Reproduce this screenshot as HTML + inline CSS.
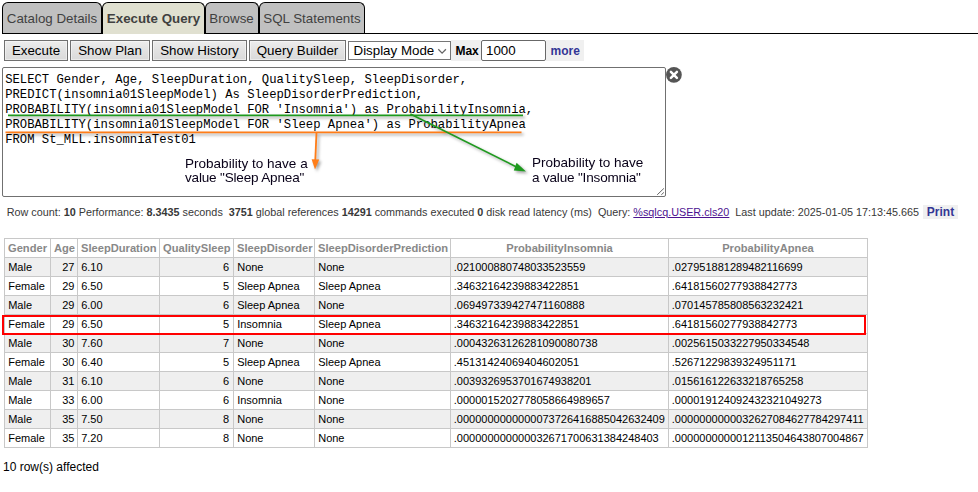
<!DOCTYPE html>
<html>
<head>
<meta charset="utf-8">
<title>Execute Query</title>
<style>
html,body{margin:0;padding:0;background:#fff;}
body{width:978px;height:492px;position:relative;overflow:hidden;font-family:"Liberation Sans",sans-serif;color:#000;}
/* tabs */
.tabbar{position:absolute;left:0;top:0;width:978px;height:34px;}
.tabline{position:absolute;left:2px;top:33px;width:976px;height:1px;background:#000;}
.tab{position:absolute;top:2px;height:31px;box-sizing:border-box;border:1px solid #000;border-bottom:none;border-radius:6px 6px 0 0;background:#c0c0c0;color:#404040;font-size:13.33px;line-height:32px;text-align:center;white-space:nowrap;}
.tab.on{background:#e0e0d0;font-weight:bold;height:32px;}
/* toolbar */
.btn{position:absolute;top:40px;height:21px;box-sizing:border-box;border:1px solid #707070;background:linear-gradient(#ededed,#e2e2e2 50%,#dadada);box-shadow:inset 0 0 0 1px rgba(255,255,255,.45);font-size:13.33px;line-height:19px;text-align:center;color:#000;white-space:nowrap;}
.sel{position:absolute;left:348px;top:41px;width:103px;height:19px;box-sizing:border-box;border:1px solid #767676;background:#fff;font-size:13.33px;line-height:17px;padding-left:4.5px;white-space:nowrap;}
.maxl{position:absolute;left:451px;top:40px;width:30px;height:21px;background:#f0f0f0;font-size:12px;font-weight:bold;line-height:22.4px;text-align:left;padding-left:4.4px;box-sizing:border-box;}
.maxi{position:absolute;left:481px;top:40px;width:65px;height:21px;box-sizing:border-box;border:1px solid #686868;border-radius:2px;background:#fff;font-size:13.33px;line-height:19px;padding-left:4px;}
.more{position:absolute;left:546px;top:40px;width:38px;height:21px;background:#f0f0f0;font-size:12px;font-weight:bold;line-height:22.4px;text-align:left;padding-left:4.6px;box-sizing:border-box;color:#333695;}
/* textarea */
.ta{position:absolute;left:2px;top:67px;width:664px;height:130px;box-sizing:border-box;border:1px solid #707070;border-radius:2px;background:#fff;}
.ta pre{margin:0;position:absolute;left:2.2px;top:4.5px;font-family:"Liberation Mono",monospace;font-size:12.22px;line-height:15px;color:#000;}
.note{position:absolute;font-size:12.15px;line-height:14.5px;color:#080018;white-space:nowrap;transform:scaleX(1.115);transform-origin:0 0;}
.note span{letter-spacing:-0.16px;}
/* status */
.status{position:absolute;left:6.7px;top:205.4px;font-size:10.8px;line-height:14px;white-space:pre;color:#383838;}
.status b{font-weight:bold;}
.status a{color:#4c1290;text-decoration:underline;text-decoration-thickness:1px;}
.print{position:absolute;left:923px;top:205px;width:35px;height:14px;background:#f0f0f0;font-size:12px;font-weight:bold;line-height:14px;text-align:center;color:#333695;}
/* table */
table.res{position:absolute;left:4px;top:238px;border-collapse:collapse;font-size:11px;table-layout:fixed;width:863px;}
table.res th,table.res td{border:1px solid #c8c8c8;height:18px;padding:0 2.6px 0 3.2px;box-sizing:border-box;white-space:nowrap;overflow:hidden;line-height:18px;}
table.res th{color:#888;font-weight:bold;text-align:left;background:#fff;font-size:11.15px;padding-left:3px;padding-right:3px;}
table.res th.c{text-align:center;}
table.res td.r{text-align:right;}
table.res td.n{padding-left:2.8px;}
table.res td.q{padding-right:3.8px;}
table.res tr.o td{background:#efefef;}
.hl{position:absolute;left:2px;top:315px;width:864px;height:20px;box-sizing:border-box;border:2px solid #ff0000;}
.foot{position:absolute;left:3px;top:460px;font-size:12px;line-height:14px;}
</style>
</head>
<body>
<div class="tabbar">
  <div class="tabline"></div>
  <div class="tab" style="left:2px;width:100px;">Catalog Details</div>
  <div class="tab on" style="left:102px;width:103px;">Execute Query</div>
  <div class="tab" style="left:205px;width:54px;padding-right:1px;">Browse</div>
  <div class="tab" style="left:259px;width:106px;">SQL Statements</div>
</div>

<div class="btn" style="left:4px;width:64px;">Execute</div>
<div class="btn" style="left:70px;width:80px;">Show Plan</div>
<div class="btn" style="left:152px;width:95px;">Show History</div>
<div class="btn" style="left:249px;width:97px;">Query Builder</div>
<div class="sel">Display Mode
  <svg style="position:absolute;left:88px;top:5.5px" width="12" height="7" viewBox="0 0 12 7"><path d="M1.3 1.2 L5.1 5.2 L8.9 1.2" fill="none" stroke="#666" stroke-width="1.25"/></svg>
</div>
<div class="maxl">Max</div>
<div class="maxi">1000</div>
<div class="more">more</div>

<div class="ta"><pre>SELECT Gender, Age, SleepDuration, QualitySleep, SleepDisorder,
PREDICT(insomnia01SleepModel) As SleepDisorderPrediction,
PROBABILITY(insomnia01SleepModel FOR 'Insomnia') as ProbabilityInsomnia,
PROBABILITY(insomnia01SleepModel FOR 'Sleep Apnea') as ProbabilityApnea
FROM St_MLL.insomniaTest01</pre><svg style="position:absolute;right:0;bottom:0" width="10" height="10" viewBox="0 0 10 10"><path d="M2.2 8.8 L8.9 2.4 M6.3 8.8 L8.9 6.4" stroke="#666" stroke-width="1" fill="none"/></svg></div>

<svg style="position:absolute;left:0;top:60px;filter:drop-shadow(2.2px 2.4px 1.5px rgba(0,0,0,.36))" width="700" height="140" viewBox="0 60 700 140">
  <g>
    <line x1="8" y1="115.4" x2="523" y2="115.4" stroke="#1e9a1e" stroke-width="1.7"/>
    <line x1="5.5" y1="132.4" x2="521.5" y2="132.4" stroke="#ff7d18" stroke-width="1.7"/>
    <line x1="410.4" y1="114" x2="517" y2="167.2" stroke="#1e9a1e" stroke-width="1.6"/>
    <polygon points="526,171.5 513.8,170.6 516.6,162.8" fill="#1e9a1e"/>
    <line x1="316.5" y1="132.4" x2="315.3" y2="160" stroke="#ff7d18" stroke-width="1.8"/>
    <polygon points="315,169.4 311.6,159.2 319.2,159.6" fill="#ff7d18"/>
  </g>
</svg>
<div class="note" style="left:185px;top:156.5px;line-height:14.2px;">Probability to have a<br><span>value "Sleep Apnea"</span></div>
<div class="note" style="left:532px;top:155.9px;line-height:14.7px;">Probability to have<br><span>a value "Insomnia"</span></div>

<svg style="position:absolute;left:665px;top:66px" width="18" height="18" viewBox="0 0 18 18">
  <circle cx="8.9" cy="8.8" r="7.9" fill="#555"/>
  <path d="M5.9 5.8 L11.9 11.8 M11.9 5.8 L5.9 11.8" stroke="#fff" stroke-width="2.5" stroke-linecap="round"/>
</svg>

<div class="status">Row count: <b>10</b> Performance: <b>8.3435</b> seconds  <b>3751</b> global references <b>14291</b> commands executed <b>0</b> disk read latency (ms)  Query: <a>%sqlcq.USER.cls20</a>  Last update: 2025-01-05 17:13:45.665</div>
<div class="print">Print</div>

<table class="res">
<colgroup><col style="width:46px"><col style="width:27px"><col style="width:82px"><col style="width:74px"><col style="width:81px"><col style="width:136px"><col style="width:218px"><col style="width:199px"></colgroup>
<tr><th>Gender</th><th>Age</th><th>SleepDuration</th><th>QualitySleep</th><th>SleepDisorder</th><th>SleepDisorderPrediction</th><th class="c">ProbabilityInsomnia</th><th class="c">ProbabilityApnea</th></tr>
<tr class="o"><td>Male</td><td class="r">27</td><td>6.10</td><td class="r q">6</td><td>None</td><td>None</td><td class="n">.021000880748033523559</td><td class="n">.027951881289482116699</td></tr>
<tr><td>Female</td><td class="r">29</td><td>6.50</td><td class="r q">5</td><td>Sleep Apnea</td><td>Sleep Apnea</td><td class="n">.34632164239883422851</td><td class="n">.64181560277938842773</td></tr>
<tr class="o"><td>Male</td><td class="r">29</td><td>6.00</td><td class="r q">6</td><td>Sleep Apnea</td><td>None</td><td class="n">.069497339427471160888</td><td class="n">.070145785808563232421</td></tr>
<tr><td>Female</td><td class="r">29</td><td>6.50</td><td class="r q">5</td><td>Insomnia</td><td>Sleep Apnea</td><td class="n">.34632164239883422851</td><td class="n">.64181560277938842773</td></tr>
<tr class="o"><td>Male</td><td class="r">30</td><td>7.60</td><td class="r q">7</td><td>None</td><td>None</td><td class="n">.00043263126281090080738</td><td class="n">.0025615033227950334548</td></tr>
<tr><td>Female</td><td class="r">30</td><td>6.40</td><td class="r q">5</td><td>Sleep Apnea</td><td>Sleep Apnea</td><td class="n">.45131424069404602051</td><td class="n">.52671229839324951171</td></tr>
<tr class="o"><td>Male</td><td class="r">31</td><td>6.10</td><td class="r q">6</td><td>None</td><td>None</td><td class="n">.0039326953701674938201</td><td class="n">.015616122633218765258</td></tr>
<tr><td>Male</td><td class="r">33</td><td>6.00</td><td class="r q">6</td><td>Insomnia</td><td>None</td><td class="n">.0000015202778058664989657</td><td class="n">.000019124092432321049273</td></tr>
<tr class="o"><td>Male</td><td class="r">35</td><td>7.50</td><td class="r q">8</td><td>None</td><td>None</td><td class="n">.0000000000000073726416885042632409</td><td class="n">.0000000000032627084627784297411</td></tr>
<tr><td>Female</td><td class="r">35</td><td>7.20</td><td class="r q">8</td><td>None</td><td>None</td><td class="n">.000000000000032671700631384248403</td><td class="n">.0000000000012113504643807004867</td></tr>
</table>
<div class="hl"></div>
<div class="foot">10 row(s) affected</div>
</body>
</html>
